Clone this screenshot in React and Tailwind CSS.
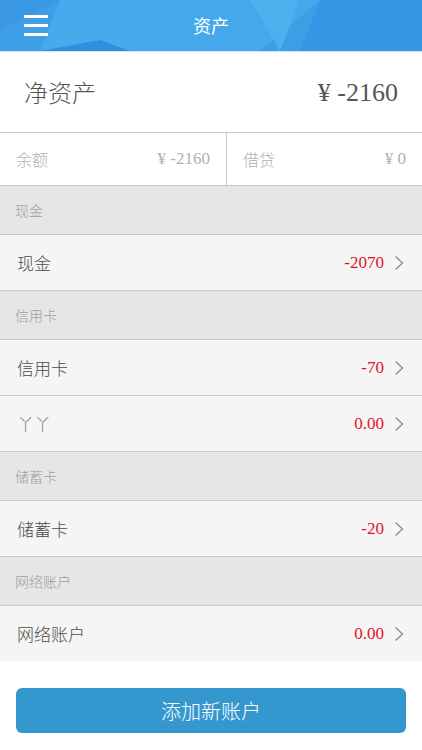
import React from 'react';

const cjk = "font-['Noto_Sans_CJK_SC','Noto_Sans',sans-serif]";
const serif = "font-['Liberation_Serif','Noto_Sans_CJK_SC',serif]";

const groups = [
  { title: '现金', items: [{ name: '现金', amount: '-2070' }] },
  {
    title: '信用卡',
    items: [
      { name: '信用卡', amount: '-70' },
      { name: '丫丫', amount: '0.00', light: true },
    ],
  },
  { title: '储蓄卡', items: [{ name: '储蓄卡', amount: '-20' }] },
  { title: '网络账户', items: [{ name: '网络账户', amount: '0.00' }] },
];

function HeaderBg() {
  return (
    <svg className="absolute inset-0 h-full w-full" viewBox="0 0 422 51" preserveAspectRatio="none">
      <rect width="422" height="51" fill="#3c9fe6" />
      <polygon points="0,0 60,0 0,30" fill="#3a98e2" />
      <polygon points="60,0 200,0 130,51 40,51" fill="#48aaec" />
      <polygon points="200,0 320,0 260,51 130,51" fill="#44a8ea" />
      <polygon points="320,0 422,0 422,51 300,51" fill="#3596e6" />
      <polygon points="0,30 60,0 40,51 0,51" fill="#3e9ee6" />
      <polygon points="100,40 130,51 40,51" fill="#2f8fde" />
      <polygon points="250,0 300,0 280,51" fill="#4bb0ee" />
    </svg>
  );
}

function Chevron() {
  return (
    <svg width="10" height="16" viewBox="0 0 10 16" className="ml-2.5 shrink-0">
      <path d="M1.5 1.5 L8.5 8 L1.5 14.5" fill="none" stroke="#8a8a8a" strokeWidth="1.3" />
    </svg>
  );
}

export default function App() {
  return (
    <div className={`w-[422px] h-[750px] overflow-hidden bg-white font-light ${cjk}`}>
      <header className="relative h-[52px] border-b border-[#c4ecfb] overflow-hidden">
        <HeaderBg />
        <div className="relative flex h-full items-center px-6">
          <div className="flex w-6 flex-col gap-[6px]">
            <span className="h-[3px] bg-white" />
            <span className="h-[3px] bg-white" />
            <span className="h-[3px] bg-white" />
          </div>
          <h1 className="flex-1 pr-6 text-center text-[18px] font-normal text-white">资产</h1>
        </div>
      </header>

      <section className="flex h-[81px] items-center justify-between border-b border-[#c8c8c8] pl-6 pr-6">
        <span className="text-[24px] text-[#555]">净资产</span>
        <span className={`${serif} text-[26px] font-normal text-[#555]`}>¥ -2160</span>
      </section>

      <section className="flex h-[53px] border-b border-[#c8c8c8]">
        <div className="flex flex-1 items-center justify-between border-r border-[#c8c8c8] pl-4 pr-4">
          <span className="text-[16px] text-[#b0b0b0]">余额</span>
          <span className={`${serif} text-[17px] font-normal text-[#b0b0b0]`}>¥ -2160</span>
        </div>
        <div className="flex w-[195px] items-center justify-between pl-4 pr-4">
          <span className="text-[16px] text-[#b0b0b0]">借贷</span>
          <span className={`${serif} text-[17px] font-normal text-[#b0b0b0]`}>¥ 0</span>
        </div>
      </section>

      {groups.map((g, gi) => (
        <div key={g.title}>
          <div className="flex h-[49px] items-center border-b border-[#c8c8c8] bg-[#e6e6e6] pl-[15px] text-[14px] text-[#a0a0a0]">
            {g.title}
          </div>
          {g.items.map((it, ii) => {
            const last = gi === groups.length - 1 && ii === g.items.length - 1;
            return (
              <div
                key={it.name}
                className={`flex items-center justify-between bg-[#f5f5f5] pl-[17px] pr-[18px] ${last ? 'h-[55px]' : 'h-[56px] border-b border-[#c8c8c8]'}`}
              >
                <span className={`text-[17px] ${it.light ? 'text-[#808080]' : 'text-[#4a4a4a]'}`}>{it.name}</span>
                <span className="flex items-center">
                  <span className={`${serif} text-[17px] font-normal text-[#e0141e]`}>{it.amount}</span>
                  <Chevron />
                </span>
              </div>
            );
          })}
        </div>
      ))}

      <div className="px-4 pt-[27px]">
        <button className="h-[45px] w-full rounded-[6px] bg-[#3498cf] text-[20px] font-light text-white">
          添加新账户
        </button>
      </div>
    </div>
  );
}
